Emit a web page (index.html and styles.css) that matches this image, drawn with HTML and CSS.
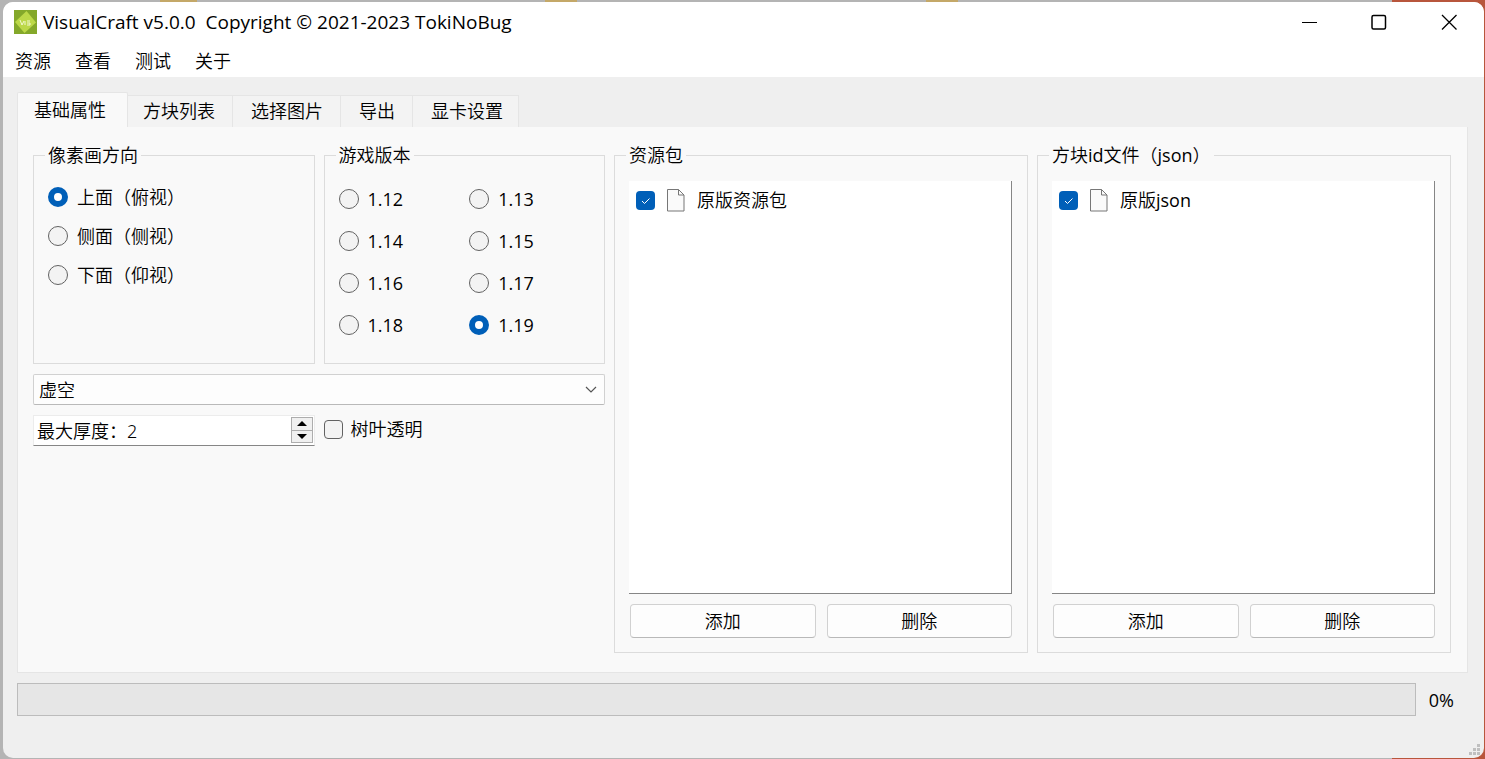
FILE: index.html
```html
<!DOCTYPE html>
<html lang="zh-CN">
<head>
<meta charset="utf-8">
<title>VisualCraft v5.0.0</title>
<link rel="stylesheet" href="styles.css">
</head>
<body>
<div class="window">
  <header class="titlebar">
    <svg class="logo" viewBox="0 0 23 24" aria-hidden="true">
      <rect width="23" height="24" fill="#84a82a"/>
      <path d="M12.500 1 22 12.500 10.500 23 1 12Z" fill="#bcd848"/>
      <path d="M6 10l2 5 2-4M11 11v4M13 11h3M13 13h3v2h-3" fill="none" stroke="#f2f8d0" stroke-width="1"/>
    </svg>
    <h1 class="title">VisualCraft v5.0.0&nbsp; Copyright © 2021-2023 TokiNoBug</h1>
    <button class="winbtn" aria-label="最小化"><svg width="16" height="16" viewBox="0 0 16 16"><path d="M1 8.500h15" stroke="#000" fill="none"/></svg></button>
    <button class="winbtn" aria-label="最大化"><svg width="16" height="16" viewBox="0 0 16 16"><rect x="1" y="1.500" width="13.500" height="13.500" rx="1.500" fill="none" stroke="#000" stroke-width="1.500"/></svg></button>
    <button class="winbtn" aria-label="关闭"><svg width="16" height="16" viewBox="0 0 16 16"><path d="M1 1l14.500 14.500M15.500 1L1 15.500" stroke="#000" stroke-width="1.300" fill="none"/></svg></button>
  </header>
  <nav class="menubar">
    <button>资源</button><button>查看</button><button>测试</button><button>关于</button>
  </nav>
  <main class="content">
    <div class="tabs" role="tablist">
      <button class="tab tab-active" role="tab" aria-selected="true">基础属性</button>
      <button class="tab" role="tab">方块列表</button>
      <button class="tab" role="tab">选择图片</button>
      <button class="tab" role="tab">导出</button>
      <button class="tab" role="tab">显卡设置</button>
    </div>
    <div class="pane">
      <div class="settings">
        <fieldset class="group">
          <legend>像素画方向</legend>
          <div class="directions">
            <label class="option"><input class="radio" type="radio" name="dir" checked>上面（俯视）</label>
            <label class="option"><input class="radio" type="radio" name="dir">侧面（侧视）</label>
            <label class="option"><input class="radio" type="radio" name="dir">下面（仰视）</label>
          </div>
        </fieldset>
        <fieldset class="group">
          <legend>游戏版本</legend>
          <div class="versions">
            <label class="option"><input class="radio" type="radio" name="ver">1.12</label>
            <label class="option"><input class="radio" type="radio" name="ver">1.13</label>
            <label class="option"><input class="radio" type="radio" name="ver">1.14</label>
            <label class="option"><input class="radio" type="radio" name="ver">1.15</label>
            <label class="option"><input class="radio" type="radio" name="ver">1.16</label>
            <label class="option"><input class="radio" type="radio" name="ver">1.17</label>
            <label class="option"><input class="radio" type="radio" name="ver">1.18</label>
            <label class="option"><input class="radio" type="radio" name="ver" checked>1.19</label>
          </div>
        </fieldset>
        <div class="combo">
          <select aria-label="生物群系"><option>虚空</option></select>
          <svg width="12" height="8" viewBox="0 0 12 8" aria-hidden="true"><path d="M1 1l5 5 5-5" fill="none" stroke="#555" stroke-width="1.200"/></svg>
        </div>
        <div class="spin">
          <input type="text" aria-label="最大厚度" value="最大厚度：2">
          <div class="steps">
            <button aria-label="增加"><svg width="10" height="5" viewBox="0 0 10 5"><path d="M0 5l5-5 5 5z"/></svg></button>
            <button aria-label="减少"><svg width="10" height="5" viewBox="0 0 10 5"><path d="M0 0l5 5 5-5z"/></svg></button>
          </div>
        </div>
        <label class="option leaves"><input class="check" type="checkbox">树叶透明</label>
      </div>
      <fieldset class="group files">
        <legend>资源包</legend>
        <div class="files-body">
          <ul class="list">
            <li><label class="item"><input class="check" type="checkbox" checked>
              <svg width="18" height="23" viewBox="0 0 18 23" aria-hidden="true"><path d="M.5 .5h11l5.500 5.500v16h-16.500z" fill="#fafafa" stroke="#777"/><path d="M11.500 .5v5.500h5.500" fill="none" stroke="#777"/></svg>
              <span>原版资源包</span></label></li>
          </ul>
          <div class="actions"><button>添加</button><button>删除</button></div>
        </div>
      </fieldset>
      <fieldset class="group files">
        <legend>方块<span class="latin">id</span>文件（<span class="latin">json</span>）</legend>
        <div class="files-body">
          <ul class="list">
            <li><label class="item"><input class="check" type="checkbox" checked>
              <svg width="18" height="23" viewBox="0 0 18 23" aria-hidden="true"><path d="M.5 .5h11l5.500 5.500v16h-16.500z" fill="#fafafa" stroke="#777"/><path d="M11.500 .5v5.500h5.500" fill="none" stroke="#777"/></svg>
              <span>原版<span class="latin">json</span></span></label></li>
          </ul>
          <div class="actions"><button>添加</button><button>删除</button></div>
        </div>
      </fieldset>
    </div>
    <div class="status">
      <progress value="0" max="100" id="progress"></progress>
      <label class="latin" for="progress">0%</label>
    </div>
  </main>
  <svg class="grip" width="11" height="11" viewBox="0 0 11 11" fill="#bfbfbf" aria-hidden="true"><path d="M8 0h3v3h-3zM4 4h3v3h-3zM8 4h3v3h-3zM0 8h3v3h-3zM4 8h3v3h-3zM8 8h3v3h-3z"/></svg>
</div>
</body>
</html>
```
FILE: styles.css
```css
* { box-sizing: border-box; }
body {
  margin: 0;
  height: 100vh;
  padding: 2px 1px 1px 3px;
  background:
    linear-gradient(90deg, transparent 160px, #c4a868 160px 197px, transparent 197px 545px, #c4a868 545px 577px, transparent 577px 926px, #c4a868 926px 958px, transparent 958px) top / 100% 2px no-repeat,
    linear-gradient(90deg, #b4b4b4 0 1392px, #b8563c 1392px);
  font: 350 18px/26px "Noto Sans", "Noto Sans CJK SC", sans-serif;
  color: #000;
}
button, input, select { font: inherit; color: inherit; margin: 0; }
button { padding: 0; border: 0; background: none; }
.latin, .title, .versions { font-family: "Open Sans", sans-serif; font-weight: 400; }
.window {
  position: relative;
  height: 100%;
  display: flex;
  flex-direction: column;
  background: #efefef;
  border-radius: 10px;
  overflow: hidden;
}
.titlebar { display: flex; align-items: center; height: 40px; padding-left: 11px; background: #fff; }
.logo { width: 23px; height: 24px; margin-right: 6px; }
.title { flex: 1; margin: 0; font-size: 19px; }
.winbtn { width: 70px; height: 40px; display: grid; place-items: center; }
.menubar { display: flex; gap: 24px; height: 35px; padding: 2px 0 0 12px; align-items: center; background: #fff; }
.content { flex: 1; display: flex; flex-direction: column; padding: 15px 16px 42px 14px; }
.tabs { display: flex; align-items: flex-end; height: 35px; }
.tab {
  height: 32px;
  padding: 0 17px 1px;
  background: #f3f3f3;
  border: solid #e5e5e5;
  border-width: 1px 1px 0 0;
}
.tab + .tab { padding-left: 18px; }
.tab:last-child { padding-right: 15px; }
.tab-active {
  height: 36px;
  margin-bottom: -1px;
  padding: 0 21px 1px 16px;
  background: #f9f9f9;
  border-left-width: 1px;
  border-radius: 2px 2px 0 0;
}
.tab-active + .tab { padding-left: 15px; }
.pane {
  flex: 1;
  display: grid;
  grid-template-columns: 572fr 414fr 414fr;
  gap: 9px;
  padding: 15px 16px 19px 15px;
  background: #f9f9f9;
  border: solid #e5e5e5;
  border-width: 0 1px 1px;
}
.settings {
  display: grid;
  grid-template-columns: repeat(2, minmax(0, 1fr));
  grid-template-rows: 222px 31px 32px;
  gap: 10px 9px;
  align-content: start;
}
.group { min-width: 0; margin: 0; padding: 0 14px 14px; border: 1px solid #dcdcdc; }
.group legend { margin-left: -3px; padding: 0 3px; }
.option { display: flex; align-items: center; gap: 9px; }
.directions { display: grid; gap: 13px; padding-top: 16px; }
.versions { display: grid; grid-template-columns: 1fr 1fr; gap: 16px 10px; padding-top: 18px; }
.radio, .check { appearance: none; flex: none; width: 20px; height: 20px; background: #f3f3f3; border: 1px solid #626262; }
.radio { border-radius: 50%; }
.radio:checked { border: 6px solid #005fb8; background: #fff; }
.check { width: 19px; height: 19px; border-radius: 4px; }
.check:checked {
  border: 0;
  background: #005fb8 url("data:image/svg+xml,%3Csvg xmlns='http://www.w3.org/2000/svg' viewBox='0 0 19 19'%3E%3Cpath d='M6 10l2.500 2.500 5-5' fill='none' stroke='%23fff'/%3E%3C/svg%3E");
}
.combo {
  grid-column: span 2;
  display: grid;
  align-items: center;
  border: 1px solid #d1d1d1;
  border-bottom-color: #b9b9b9;
  border-radius: 2px;
  background: #fdfdfd;
}
.combo select, .combo svg { grid-area: 1 / 1; }
.combo select { appearance: none; width: 100%; padding: 0 5px; border: 0; background: none; }
.combo svg { justify-self: end; margin-right: 7px; pointer-events: none; }
.spin { display: flex; align-items: center; height: 31px; padding: 0 1px 1px 0; background: #fff; border: 1px solid #ececec; border-bottom-color: #868686; }
.spin input { flex: 1; min-width: 0; height: 28px; padding: 0 3px; border: 0; background: none; }
.steps { display: grid; width: 22px; height: 26px; border: 1px solid #adadad; background: #f0f0f0; }
.steps button { display: grid; place-items: center; }
.steps button + button { border-top: 1px solid #adadad; }
.leaves { gap: 8px; height: 28px; }
.files { display: flex; flex-direction: column; padding-right: 15px; }
.files-body { display: flex; flex-direction: column; gap: 10px; height: 100%; padding-top: 13px; }
.list { flex: 1; margin: 0; padding: 6px 7px; list-style: none; background: #fff; border: solid #868686; border-width: 0 1px 1px 0; }
.item { display: flex; align-items: center; gap: 12px; }
.actions { display: grid; grid-template-columns: 1fr 1fr; gap: 11px; padding-left: 1px; }
.actions button { height: 34px; background: #fdfdfd; border: 1px solid #d1d1d1; border-bottom-color: #b9b9b9; border-radius: 4px; }
.status { display: flex; align-items: center; gap: 13px; margin-top: 10px; padding-right: 14px; }
.status progress { appearance: none; flex: 1; height: 33px; border: 1px solid #bcbcbc; background: #e6e6e6; }
.status progress::-webkit-progress-bar { background: #e6e6e6; }
.grip { position: absolute; right: 4px; bottom: 3px; }
```
